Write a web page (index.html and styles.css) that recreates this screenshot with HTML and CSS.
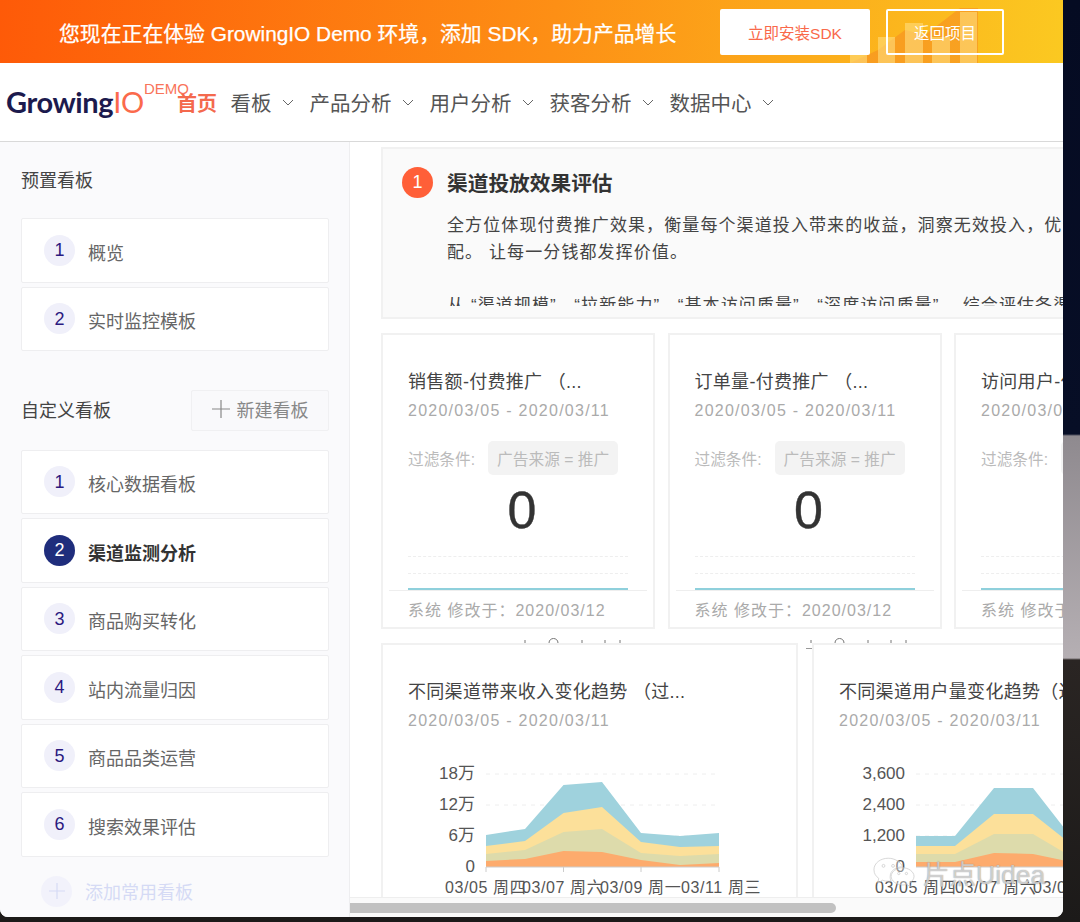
FILE: index.html
```html
<!DOCTYPE html>
<html lang="zh-CN">
<head>
<meta charset="utf-8">
<title>GrowingIO Demo</title>
<link rel="stylesheet" href="styles.css">
</head>
<body>
<div class="window">
  <header class="banner">
    <svg class="banner-art" viewBox="840 0 150 63" aria-hidden="true">
      <polygon class="art-area" points="850,63 878,50 905,30 925,35 960,8 978,8 978,63"/>
      <rect class="art-bar" x="850" y="53" width="17" height="10"/>
      <rect class="art-bar" x="878" y="37" width="17" height="26"/>
      <rect class="art-bar" x="905" y="23" width="18" height="40"/>
      <rect class="art-bar" x="932" y="37" width="18" height="26"/>
      <rect class="art-bar" x="960" y="12" width="17" height="51"/>
    </svg>
    <div class="banner-text">您现在正在体验 GrowingIO Demo 环境，添加 SDK，助力产品增长</div>
    <a class="btn-solid">立即安装SDK</a>
    <a class="btn-outline">返回项目</a>
  </header>

  <nav class="nav">
    <div class="logo"><span class="logo-a">Growing</span><span class="logo-b">IO</span><span class="logo-demo">DEMO</span></div>
    <a class="nav-home">首页</a>
    <a class="nav-item">看板<svg class="chev" viewBox="0 0 12 7"><path d="M1 1l5 5 5-5"/></svg></a>
    <a class="nav-item">产品分析<svg class="chev" viewBox="0 0 12 7"><path d="M1 1l5 5 5-5"/></svg></a>
    <a class="nav-item">用户分析<svg class="chev" viewBox="0 0 12 7"><path d="M1 1l5 5 5-5"/></svg></a>
    <a class="nav-item">获客分析<svg class="chev" viewBox="0 0 12 7"><path d="M1 1l5 5 5-5"/></svg></a>
    <a class="nav-item">数据中心<svg class="chev" viewBox="0 0 12 7"><path d="M1 1l5 5 5-5"/></svg></a>
  </nav>

  <div class="content">
    <aside class="side">
      <h3 class="side-title">预置看板</h3>
      <ul class="side-list">
        <li class="side-item"><span class="num">1</span><span class="label">概览</span></li>
        <li class="side-item"><span class="num">2</span><span class="label">实时监控模板</span></li>
      </ul>
      <div class="side-head">
        <h3 class="side-title">自定义看板</h3>
        <button class="btn-new"><svg class="plus" viewBox="0 0 18 18"><path d="M9 0v18M0 9h18"/></svg>新建看板</button>
      </div>
      <ul class="side-list list-custom">
        <li class="side-item"><span class="num">1</span><span class="label">核心数据看板</span></li>
        <li class="side-item active"><span class="num">2</span><span class="label">渠道监测分析</span></li>
        <li class="side-item"><span class="num">3</span><span class="label">商品购买转化</span></li>
        <li class="side-item"><span class="num">4</span><span class="label">站内流量归因</span></li>
        <li class="side-item"><span class="num">5</span><span class="label">商品品类运营</span></li>
        <li class="side-item"><span class="num">6</span><span class="label">搜索效果评估</span></li>
      </ul>
      <div class="side-add"><span class="add-circle"><svg class="plus-add" viewBox="0 0 16 16"><path d="M8 0v16M0 8h16"/></svg></span>添加常用看板</div>
    </aside>

    <div class="main">
      <div class="port">
        <section class="panel">
          <div class="panel-head"><span class="panel-num">1</span><h2 class="panel-title">渠道投放效果评估</h2></div>
          <div class="panel-body">
            <p class="panel-p">全方位体现付费推广效果，衡量每个渠道投入带来的收益，洞察无效投入，优化渠道投放预算分<br>配。 让每一分钱都发挥价值。</p>
            <p class="panel-p gap">从 “渠道规模”   “拉新能力”   “基本访问质量”   “深度访问质量”    综合评估各渠道</p>
          </div>
        </section>

        <div class="kpi-row">
          <article class="kpi">
            <h4 class="c-title">销售额-付费推广 （...</h4>
            <div class="c-date">2020/03/05 - 2020/03/11</div>
            <div class="filter"><span>过滤条件:</span><span class="tag">广告来源 = 推广</span></div>
            <div class="big">0</div>
            <div class="spark"><i class="dash"></i><i class="dash"></i><i class="teal"></i></div>
            <div class="c-foot">系统 修改于：2020/03/12</div>
          </article>
          <article class="kpi">
            <h4 class="c-title">订单量-付费推广 （...</h4>
            <div class="c-date">2020/03/05 - 2020/03/11</div>
            <div class="filter"><span>过滤条件:</span><span class="tag">广告来源 = 推广</span></div>
            <div class="big">0</div>
            <div class="spark"><i class="dash"></i><i class="dash"></i><i class="teal"></i></div>
            <div class="c-foot">系统 修改于：2020/03/12</div>
          </article>
          <article class="kpi">
            <h4 class="c-title">访问用户-付费推广 （...</h4>
            <div class="c-date">2020/03/05 - 2020/03/11</div>
            <div class="filter"><span>过滤条件:</span><span class="tag">广告来源 = 推广</span></div>
            <div class="big">0</div>
            <div class="spark"><i class="dash"></i><i class="dash"></i><i class="teal"></i></div>
            <div class="c-foot">系统 修改于：2020/03/12</div>
          </article>
        </div>

        <svg class="scrap" viewBox="381 629 700 14" aria-hidden="true">
          <path d="M525 643v-3M549 643c0-6 9-6 9 0M582 643v-3M605 643v-3M620 643v-3M811 643v-3M835 643c0-6 9-6 9 0M868 643v-3M891 643v-3M906 643v-3"/>
        </svg>

        <div class="chart-row">
          <article class="chart-card">
            <h4 class="c-title">不同渠道带来收入变化趋势 （过...</h4>
            <div class="c-date">2020/03/05 - 2020/03/11</div>
            <svg class="chart" viewBox="381 745 417 160">
              <path class="grid" d="M486 774H719M486 805H719M486 836H719"/>
              <polygon class="a-teal" points="486,835 525,829 563.5,785 602,782 641,833 680,836 719,833 719,867 486,867"/>
              <polygon class="a-yellow" points="486,846 525,841 563.5,813 602,807 641,842 680,847 719,846 719,867 486,867"/>
              <polygon class="a-olive" points="486,854 525,850 563.5,832 602,829 641,853 680,856 719,854 719,867 486,867"/>
              <polygon class="a-orange" points="486,861 525,859 563.5,851 602,852 641,860 680,865 719,863 719,867 486,867"/>
              <path class="axis" d="M486 867H719M486 867v5M563.5 867v5M641 867v5M719 867v5"/>
              <text class="y-l" x="475" y="779">18万</text>
              <text class="y-l" x="475" y="810">12万</text>
              <text class="y-l" x="475" y="841">6万</text>
              <text class="y-l" x="475" y="872">0</text>
              <text class="x-l" x="445" y="893">03/05 周四</text>
              <text class="x-l" x="522" y="893">03/07 周六</text>
              <text class="x-l" x="600" y="893">03/09 周一</text>
              <text class="x-l" x="681" y="893">03/11 周三</text>
            </svg>
          </article>
          <article class="chart-card">
            <h4 class="c-title">不同渠道用户量变化趋势（过去7天）</h4>
            <div class="c-date">2020/03/05 - 2020/03/11</div>
            <svg class="chart" viewBox="812 745 417 160">
              <path class="grid" d="M916 774H1149M916 805H1149M916 836H1149"/>
              <polygon class="a-teal" points="916,836 955,836 994,788 1033,788 1072,838 1111,838 1149,838 1149,867 916,867"/>
              <polygon class="a-yellow" points="916,846 955,846 994,814 1033,814 1072,845 1111,848 1149,848 1149,867 916,867"/>
              <polygon class="a-olive" points="916,854 955,854 994,834 1033,834 1072,857 1111,858 1149,858 1149,867 916,867"/>
              <polygon class="a-orange" points="916,862 955,862 994,853 1033,854 1072,862 1111,865 1149,864 1149,867 916,867"/>
              <path class="axis" d="M916 867H1149"/>
              <text class="y-l" x="905" y="779">3,600</text>
              <text class="y-l" x="905" y="810">2,400</text>
              <text class="y-l" x="905" y="841">1,200</text>
              <text class="y-l" x="905" y="872">0</text>
              <text class="x-l" x="875" y="893">03/05 周四</text>
              <text class="x-l" x="955" y="893">03/07 周六</text>
              <text class="x-l" x="1033" y="893">03/09 周一</text>
            </svg>
          </article>
        </div>
      </div>
      <div class="scrollbar"><div class="thumb"></div></div>
    </div>
  </div>

  <div class="watermark">
    <svg class="wm-icon" viewBox="0 0 44 34" aria-hidden="true">
      <path d="M16 1C8 1 1 6 1 13c0 4 2 7 5 9l-1 5 5-3c2 1 4 1 6 1 1 0 2 0 3 0-1-2-1-3-1-5 0-6 6-10 13-10-2-5-8-9-15-9z"/>
      <path d="M31 11c-6 0-12 4-12 9s6 9 12 9c1 0 3 0 4-1l4 3-1-4c3-2 5-4 5-7 0-5-6-9-12-9z"/>
      <circle cx="11" cy="9" r="1.5"/><circle cx="21" cy="9" r="1.5"/><circle cx="27" cy="17" r="1.2"/><circle cx="35" cy="17" r="1.2"/>
    </svg>
    <span class="wm-text">片点Uidea</span>
  </div>
</div>
</body>
</html>
```

FILE: styles.css
```css
* { box-sizing: border-box; }
html, body { margin: 0; padding: 0; }
body {
  width: 1080px;
  height: 922px;
  overflow: hidden;
  font-family: "Liberation Sans", "Noto Sans CJK SC", sans-serif;
  background: linear-gradient(#050b22 0, #070e26 434px, #8f8a8f 436px, #b5afb3 658px, #2a2523 660px, #1c1a19 100%);
}
h2, h3, h4, p, ul { margin: 0; padding: 0; font-weight: normal; list-style: none; }

.window {
  position: relative;
  width: 1063px;
  height: 917px;
  display: flex;
  flex-direction: column;
  background: #fff;
  border-radius: 0 0 8px 8px;
  overflow: hidden;
}

/* banner */
.banner {
  position: relative;
  flex: 0 0 63px;
  display: flex;
  align-items: center;
  padding-left: 59px;
  background: linear-gradient(95deg, #fe5a08 0%, #fd8f15 52%, #fbc921 100%);
}
.banner-art { position: absolute; left: 840px; top: 0; width: 150px; height: 63px; }
.art-area { fill: #f58a22; opacity: .55; }
.art-bar { fill: #ffdc7a; opacity: .62; }
.banner-text { position: relative; width: 661px; color: #fff; font-size: 20.85px; white-space: nowrap; -webkit-text-stroke: .25px #fff; }
.btn-solid, .btn-outline {
  position: relative;
  height: 46px;
  display: flex;
  align-items: center;
  justify-content: center;
  font-size: 15.5px;
  border-radius: 2px;
}
.btn-solid { width: 150px; background: #fff; color: #f9694a; }
.btn-outline { width: 118px; margin-left: 16px; border: 2px solid #fff; color: #fff; }

/* nav */
.nav {
  flex: 0 0 79px;
  display: flex;
  align-items: center;
  padding-left: 6px;
  background: #fff;
  border-bottom: 1px solid #d9d9d9;
}
.logo { position: relative; width: 171px; font-family: Lato, "Liberation Sans", sans-serif; font-size: 29px; font-weight: 700; letter-spacing: -.4px; line-height: 40px; }
.logo-a { color: #1c1a4d; }
.logo-b { color: #fb6a4c; font-weight: 400; }
.logo-demo { position: absolute; left: 138px; top: -2px; font-family: "Liberation Sans", sans-serif; font-size: 15px; font-weight: 400; letter-spacing: 0; line-height: 18px; color: #f9745a; }
.nav-home { width: 53.5px; font-size: 20px; font-weight: 700; color: #f4694d; }
.nav-item { display: flex; align-items: center; margin-right: 16px; font-size: 20.5px; color: #555; white-space: nowrap; }
.chev { width: 12px; height: 7px; margin-left: 10px; fill: none; stroke: #666; stroke-width: 1; }

/* layout */
.content { flex: 1; min-height: 0; display: flex; }
.side {
  flex: 0 0 350px;
  padding: 26px 20px 0 21px;
  background: #fafafc;
  border-right: 1px solid #eeeef0;
}
.side-title { font-size: 18px; line-height: 26px; color: #444; }
.side-list { margin-top: 24px; display: flex; flex-direction: column; gap: 4px; }
.list-custom { margin-top: 19px; }
.side-item {
  height: 64.5px;
  display: flex;
  align-items: center;
  gap: 13px;
  padding-left: 22px;
  background: #fff;
  border: 1px solid #eeeef0;
  border-radius: 2px;
  font-size: 18px;
  color: #666;
}
.label { padding-top: 3px; }
.num {
  width: 31px;
  height: 31px;
  flex: none;
  display: flex;
  align-items: center;
  justify-content: center;
  padding-top: 1px;
  border-radius: 50%;
  background: #f0f0fa;
  color: #2b1a80;
}
.active { color: #333; font-weight: 700; }
.active .num { background: #1f2d7c; color: #fff; font-weight: 400; }
.side-head { margin-top: 38.5px; height: 41px; display: flex; align-items: center; justify-content: space-between; }
.side-head .side-title { padding-top: 2px; }
.btn-new {
  width: 138px;
  height: 41px;
  display: flex;
  align-items: center;
  justify-content: center;
  gap: 7px;
  padding: 0 0 2px;
  font: inherit;
  font-size: 18px;
  color: #888;
  background: #f9f9fb;
  border: 1px solid #f0f0f2;
  border-radius: 2px;
}
.plus { width: 18px; height: 18px; fill: none; stroke: #888; stroke-width: 1.2; }
.side-add { margin-top: 19px; padding-left: 20px; display: flex; align-items: center; gap: 13px; font-size: 18px; color: #d5daf5; }
.add-circle { width: 31px; height: 31px; display: flex; align-items: center; justify-content: center; border-radius: 50%; background: #f2f2fb; }
.plus-add { width: 16px; height: 16px; fill: none; stroke: #d5daf5; stroke-width: 1.2; }

.main { flex: 1; min-width: 0; display: flex; flex-direction: column; }
.port { flex: 1; min-height: 0; overflow: hidden; padding: 5px 0 0 31px; }
.scrollbar { flex: 0 0 20px; padding-top: 5px; background: #fafafa; border-top: 1px solid #eee; }
.thumb { width: 486px; height: 10px; background: #c1c1c1; border-radius: 0 5px 5px 0; }

/* top panel */
.panel { width: 760px; height: 172px; padding: 18px 0 0 19px; background: #fafafa; border: 2px solid #f1f1f1; }
.panel-head { display: flex; align-items: center; gap: 14px; }
.panel-num { width: 31px; height: 31px; display: flex; align-items: center; justify-content: center; border-radius: 50%; background: #ff5f38; color: #fff; font-size: 18px; }
.panel-title { padding-top: 2px; font-size: 20.7px; line-height: 28px; font-weight: 700; color: #333; }
.panel-body { height: 94px; margin: 14px 0 0 45px; overflow: hidden; }
.panel-p { font-size: 17px; line-height: 27px; letter-spacing: 1.1px; color: #444; white-space: pre; }
.gap { margin-top: 26px; }

/* kpi cards */
.kpi-row { margin-top: 14px; width: 900px; display: flex; gap: 12.5px; }
.kpi { flex: 0 0 274px; min-width: 0; height: 296px; padding: 34px 0 0 25px; background: #fff; border: 2px solid #f1f1f1; overflow: hidden; }
.c-title { font-size: 18px; line-height: 26px; letter-spacing: .3px; color: #444; white-space: nowrap; }
.c-date { margin-top: 5px; font-size: 16px; line-height: 22px; letter-spacing: 1.25px; color: #aaa; white-space: nowrap; }
.filter { margin-top: 19px; display: flex; align-items: center; gap: 13px; font-size: 15.7px; color: #bbb; }
.tag { height: 34px; padding: 0 9px; display: flex; align-items: center; background: #f3f3f3; border-radius: 5px; white-space: nowrap; }
.big { margin-top: 5px; padding-right: 17px; text-align: center; font-size: 52px; line-height: 60px; color: #333; -webkit-text-stroke: .4px #333; }
.spark { width: 258px; margin: 16px 0 0 -19px; padding: 0 19px; border-bottom: 1px solid #eee; }
.dash { display: block; height: 17px; border-top: 1px dashed #eee; }
.teal { display: block; height: 2px; margin-top: -2px; background: #8fd0dc; }
.c-foot { margin-top: 9px; font-size: 16px; line-height: 22px; letter-spacing: 1px; color: #aaa; white-space: nowrap; }

.scrap { display: block; width: 700px; height: 14px; fill: none; stroke: #777; stroke-width: 1; }

/* chart cards */
.chart-row { position: relative; width: 900px; display: flex; gap: 14px; }
.chart-row::before { content: ""; position: absolute; left: 425px; top: 5px; width: 6px; height: 1px; background: #999; }
.chart-card { flex: 0 0 417px; min-width: 0; height: 300px; padding: 34px 0 0 25px; background: #fff; border: 2px solid #f1f1f1; overflow: hidden; }
.chart { display: block; width: 417px; height: 160px; margin: 13px 0 0 -27px; overflow: visible; }
.grid { fill: none; stroke: #eee; stroke-width: 1; stroke-dasharray: 4 5; }
.a-teal { fill: #9fd2dd; }
.a-yellow { fill: #fce09a; }
.a-olive { fill: #dddbab; }
.a-orange { fill: #fdab6d; }
.axis { fill: none; stroke: #ccc; stroke-width: 1; }
.y-l { font-size: 17px; fill: #555; text-anchor: end; }
.x-l { font-size: 16px; letter-spacing: .6px; fill: #555; }

/* watermark */
.watermark { position: absolute; left: 873px; top: 855px; display: flex; align-items: flex-start; gap: 8px; }
.wm-icon { width: 42px; height: 37px; fill: rgba(255,255,255,.35); stroke: rgba(200,200,200,.75); stroke-width: 1; }
.wm-text { font-size: 26.5px; line-height: 40px; color: rgba(255,255,255,.6); text-shadow: 0 0 1px rgba(110,110,110,.9); white-space: nowrap; }
```
